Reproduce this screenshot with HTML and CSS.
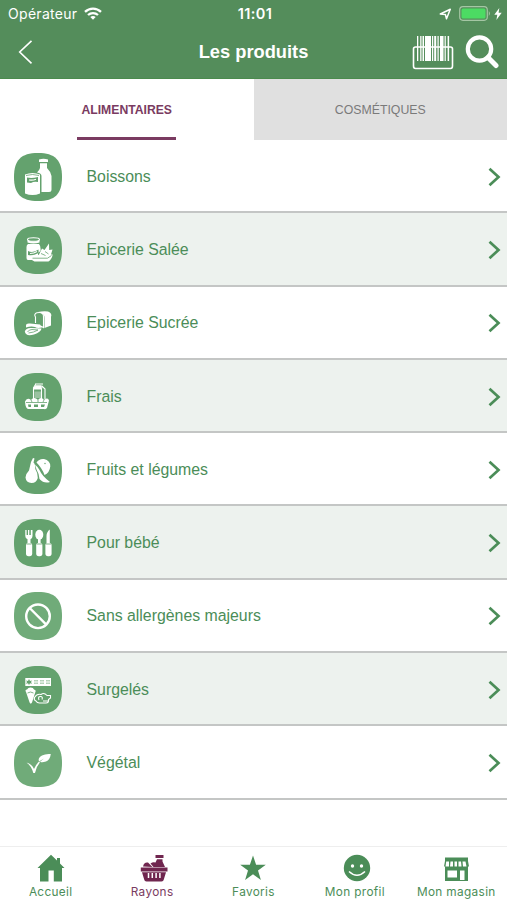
FILE: index.html
```html
<!DOCTYPE html>
<html lang="fr">
<head>
    <meta charset="UTF-8">
    <meta name="viewport" content="width=device-width, initial-scale=1.0">
    <title>Les produits</title>
    <link rel="stylesheet" href="styles.css">
</head>
<body>

<div class="app">
    <header class="header">
        <div class="status">
            <div class="status-left">
                <span class="operator">Opérateur</span>
                <svg width="18" height="13" viewBox="0 0 18 13" fill="none" stroke="#fff" stroke-width="2.3">
                    <path d="M1 4.8C5.6.5 12.4.5 17 4.8"/>
                    <path d="M4 8C6.8 5.4 11.2 5.4 14 8"/>
                    <path d="M6.3 10.1Q9 7.9 11.7 10.1L9 12.8Z" fill="#fff" stroke="none"/>
                </svg>
            </div>
            <span class="clock">11:01</span>
            <div class="status-right">
                <svg width="13" height="12" viewBox="0 0 13 12" fill="none" stroke="#fff" stroke-width="1.5" stroke-linejoin="round">
                    <path d="M1.3 6L11.3 1.2 7.5 10.8 6.4 6.5Z"/>
                </svg>
                <svg width="32" height="15" viewBox="0 0 32 15">
                    <rect x=".7" y=".7" width="27.6" height="13.6" rx="3.2" fill="none" stroke="#a5c6a4" stroke-width="1.2"/>
                    <rect x="2.5" y="2.5" width="24" height="10" rx="1.5" fill="#4cdb63"/>
                    <path d="M29.8 5Q32 7.5 29.8 10Z" fill="#a5c6a4"/>
                </svg>
                <svg width="8" height="12" viewBox="0 0 8 12">
                    <path d="M5.3 0L.3 6.8H3.3L2.4 12 7.7 4.8H4.6Z" fill="#fff"/>
                </svg>
            </div>
        </div>
        <div class="nav">
            <a href="#" class="back" aria-label="Retour">
                <svg width="16" height="26" viewBox="0 0 16 26" fill="none" stroke="#fff" stroke-width="1.6">
                    <path d="M13.5 1.8L1.7 13 13.5 24.3"/>
                </svg>
            </a>
            <h1>Les produits</h1>
            <div class="actions">
                <svg width="42" height="35" viewBox="0 0 42 35" fill="#fff">
                    <path d="M5 1h1.3v25H5zM8.2 1h1.3v25H8.2zM10.5 1h1.5v25h-1.5zM13 1h6v25h-6zM20 1h1.2v25H20zM22.2 1h2v25h-2zM25.5 1h1.2v25h-1.2zM28 1h3.5v25H28zM32.6 1h1.2v25h-1.2zM35.6 1h1.5v25h-1.5z"/>
                    <path d="M1.5 31V14Q1.5 12 3.5 12H38.5Q40.5 12 40.5 14V31Q40.5 33.500 38.500 33.500H3.500Q1.500 33.500 1.500 31Z" fill="none" stroke="#fff" stroke-width="1.6"/>
                </svg>
                <svg width="34" height="34" viewBox="0 0 34 34" fill="none" stroke="#fff">
                    <circle cx="14.5" cy="14" r="11.7" stroke-width="4.2"/>
                    <path d="M23 22.5L31 30.5" stroke-width="5" stroke-linecap="round"/>
                </svg>
            </div>
        </div>
    </header>

    <div class="tabs">
        <a href="#" class="tab active"><span>ALIMENTAIRES</span></a>
        <a href="#" class="tab"><span>COSMÉTIQUES</span></a>
    </div>

    <main class="list">
        <a href="#" class="row">
            <svg class="icon" viewBox="0 0 48 48">
                <path class="tile" d="M24 0C41 0 48 7 48 24S41 48 24 48 0 41 0 24 7 0 24 0Z"/>
                <path d="M25 6.5Q29.5 5 34 6.5V9H25Z"/>
                <path d="M26 10.3H33V15Q37 19 37.5 23V36.5Q37.5 39 35 39H27.5V23Q27.5 20 23 19.5Q25.5 17 26 15Z"/>
                <path d="M11 21.5Q18.5 18.5 26 21.5V40.5Q18.5 43.5 11 40.5Z"/>
                <path class="line-green" d="M12 22.5Q18.5 20.5 25 22.5"/>
                <path class="cut" d="M13 24.5Q18 25.5 24 24V29Q20 28 17 30L13 29.5Z"/>
                <path class="line" d="M15 27Q19 27.5 22 26.2"/>
            </svg>
            <span class="label">Boissons</span>
            <svg class="chevron" viewBox="0 0 14 20"><path d="M2.5 1.8L11.5 10 2.5 18.2"/></svg>
        </a>
        <a href="#" class="row">
            <svg class="icon" viewBox="0 0 48 48">
                <path class="tile" d="M24 0C41 0 48 7 48 24S41 48 24 48 0 41 0 24 7 0 24 0Z"/>
                <ellipse class="line" cx="19.5" cy="13.5" rx="6" ry="1.8"/>
                <path d="M13.5 14Q19.5 17 25.5 14V16.5Q19.5 18.5 13.5 16.5Z"/>
                <path d="M14 18H25Q27 20 26.500 25L24 27V34H14Q12.500 34 12.500 32V21Q12.500 19 14 18Z"/>
                <path class="cut" d="M14 25Q19 27.5 24.500 23.500V27Q19 30 14 29Z"/>
                <path class="line" d="M16 27.500Q20 27.500 23 25.500"/>
                <path d="M25 28.500L28 22.500 30.500 24 35 17.500 35.200 24 38.500 23.500 37 28.500H38.700Q38 33 34.500 35.500H20.500Q17 34 16 30.500Q21 32 25 28.500Z"/>
                <path class="line-green" d="M18.500 32.200H33.500L37.500 29.500M27 27.500L31.500 29.500M31 25.500L34.500 28"/>
            </svg>
            <span class="label">Epicerie Salée</span>
            <svg class="chevron" viewBox="0 0 14 20"><path d="M2.5 1.8L11.5 10 2.5 18.2"/></svg>
        </a>
        <a href="#" class="row">
            <svg class="icon" viewBox="0 0 48 48">
                <path class="tile" d="M24 0C41 0 48 7 48 24S41 48 24 48 0 41 0 24 7 0 24 0Z"/>
                <path d="M24 13Q29 12 34 12.5Q38.5 14 37 18V26.5L30.5 29V19Q31 14.5 24 13Z"/>
                <path class="line" d="M21.5 24V18Q19.5 15 23 13.8Q30 12.5 29.5 18V28.5L26.5 27"/>
                <path d="M12 26.5Q12 24 16 24.5L26 25.5 28 28.5Q23 29.5 21 28Q17 27 12 28.5Z"/>
                <path d="M10.8 32.5Q12 28.5 17.5 29L27.5 29.5Q27 33 20 35.500Q12 38 10.800 32.500Z"/>
                <path class="line-green" d="M13.500 33Q15 30.500 18 30.500L24 31Q20 33.500 14.500 34"/>
            </svg>
            <span class="label">Epicerie Sucrée</span>
            <svg class="chevron" viewBox="0 0 14 20"><path d="M2.5 1.8L11.5 10 2.5 18.2"/></svg>
        </a>
        <a href="#" class="row">
            <svg class="icon" viewBox="0 0 48 48">
                <path class="tile" d="M24 0C41 0 48 7 48 24S41 48 24 48 0 41 0 24 7 0 24 0Z"/>
                <path class="line" d="M21 11H29M21.5 11.500L19.500 15V26M21 13H28L31 16V26M20 16H27.500V26M28 13L27.500 16"/>
                <path d="M20.500 18.500H27V25H20.500Z" opacity=".35"/>
                <path d="M19.500 14.500L22 12.500H27L27 16H19.500Z"/>
                <path d="M11 28.500Q13 24 17 27Q20 23 24 27Q27 23 30 27Q34 24 35 27.500L33 35Q32 36.500 30 36H14Q11.500 35.500 11 28.500Z"/>
                <path class="line-green" d="M12 29.500H33M17 27L18 29M24 27V29M30 27L29 29"/>
                <path class="cut" d="M14 31.500H17V34H14.500ZM20 31.500H24V34H20ZM27 31.500H31L30 34H27Z"/>
            </svg>
            <span class="label">Frais</span>
            <svg class="chevron" viewBox="0 0 14 20"><path d="M2.5 1.8L11.5 10 2.5 18.2"/></svg>
        </a>
        <a href="#" class="row">
            <svg class="icon" viewBox="0 0 48 48">
                <path class="tile" d="M24 0C41 0 48 7 48 24S41 48 24 48 0 41 0 24 7 0 24 0Z"/>
                <path d="M17 16L19 12 20.500 12.500 19.500 16.500Q21.500 18 21.300 23Q24 27 23.800 32Q22.500 37 17.500 37Q12 36.500 11.500 31.500Q11.500 28 15 24.500Z"/>
                <path d="M22.500 16.500Q25 12.500 30 13Q36.500 14.500 36.300 20.500Q35.500 27 30.500 29Q28 22 22.500 16.500Z"/>
                <path d="M21 18.500Q23 20 25.500 24Q28 30 36 36Q30 38 25.500 33Q25 27.500 22.500 23.500Z"/>
                <circle class="cut" cx="31" cy="17.500" r=".7"/>
            </svg>
            <span class="label">Fruits et légumes</span>
            <svg class="chevron" viewBox="0 0 14 20"><path d="M2.5 1.8L11.5 10 2.5 18.2"/></svg>
        </a>
        <a href="#" class="row">
            <svg class="icon" viewBox="0 0 48 48">
                <path class="tile" d="M24 0C41 0 48 7 48 24S41 48 24 48 0 41 0 24 7 0 24 0Z"/>
                <path d="M11.300 11H12.600V16H14V11H15.300V16H16.800V11H18.500V17Q18.500 19.500 16.500 20.300V24H13.500V20.300Q11.300 19.500 11.300 17Z"/>
                <ellipse cx="25.300" cy="15.800" rx="4" ry="5"/>
                <path d="M24 20H26.600V24H24ZM32.500 24V17Q32.500 13 35.800 10.500V24Z"/>
                <rect x="12" y="23.800" width="6.200" height="13.400" rx="2.600"/>
                <rect x="22.200" y="23.800" width="6.200" height="13.400" rx="2.600"/>
                <rect x="31.400" y="23.800" width="6.200" height="13.400" rx="2.600"/>
                <path class="line-green" d="M12.500 25H17.500M22.800 25H27.800M32 25H37"/>
            </svg>
            <span class="label">Pour bébé</span>
            <svg class="chevron" viewBox="0 0 14 20"><path d="M2.5 1.8L11.5 10 2.5 18.2"/></svg>
        </a>
        <a href="#" class="row light">
            <svg class="icon" viewBox="0 0 48 48">
                <path class="tile" d="M24 0C41 0 48 7 48 24S41 48 24 48 0 41 0 24 7 0 24 0Z"/>
                <g fill="none" stroke="#fff" stroke-width="2.4">
                    <circle cx="24" cy="24.3" r="11.8"/>
                    <path d="M15.7 16L32.3 32.6"/>
                </g>
            </svg>
            <span class="label">Sans allergènes majeurs</span>
            <svg class="chevron" viewBox="0 0 14 20"><path d="M2.5 1.8L11.5 10 2.5 18.2"/></svg>
        </a>
        <a href="#" class="row">
            <svg class="icon" viewBox="0 0 48 48">
                <path class="tile" d="M24 0C41 0 48 7 48 24S41 48 24 48 0 41 0 24 7 0 24 0Z"/>
                <path d="M11.300 12H37V20H11.300Z"/>
                <path class="cut" d="M15 13L16 15 18 14.500 17 16 18 17.800 16 17.200 15 19 14 17.200 12 17.800 13 16 12 14.500 14 15Z"/>
                <path class="cut" d="M20.500 14H23.500V18H20.500ZM26.500 14H29.500V18H26.500ZM32.500 14H35.500V18H32.500Z"/>
                <path class="line" d="M20 16H24M22 14V18M26 16H30M28 14V18M32 16H36M34 14V18"/>
                <path d="M12 26Q10.500 24 13 23.500Q14 21.500 16.500 21.500Q19.500 21.500 20 23.500Q22.500 24 21.200 26.500L18 36.500Q16.800 38.800 15.600 36.500Z"/>
                <path class="line-green" d="M13.500 27Q16.500 25 19.500 27"/>
                <path class="line" d="M22 35Q19.500 34 20.500 31.500Q23 27.500 27 28.500Q30 26 33 29.500H36.500V32L34.500 33.500Q35 37 32 37H25.500Q23 37 22 35ZM25 34Q23.500 30 27 30.500Q29 31 28 33.500M29 35H35"/>
            </svg>
            <span class="label">Surgelés</span>
            <svg class="chevron" viewBox="0 0 14 20"><path d="M2.5 1.8L11.5 10 2.5 18.2"/></svg>
        </a>
        <a href="#" class="row light">
            <svg class="icon" viewBox="0 0 48 48">
                <path class="tile" d="M24 0C41 0 48 7 48 24S41 48 24 48 0 41 0 24 7 0 24 0Z"/>
                <path d="M12.500 23.500Q18 25 20 30Q21.500 26 25 22.500L26 23.300Q22 28 21 34H19.300Q17.500 27 12.500 23.500Z"/>
                <path d="M25 22.500Q23.500 19 28 16.500Q31.500 14.500 36.800 15Q36 21 32 22.500Q28 24 26 22.800L30 19.500Z"/>
            </svg>
            <span class="label">Végétal</span>
            <svg class="chevron" viewBox="0 0 14 20"><path d="M2.5 1.8L11.5 10 2.5 18.2"/></svg>
        </a>
    </main>

    <footer class="tabbar">
        <a href="#" class="item">
            <svg viewBox="0 0 28 28">
                <path d="M14 .8L20 6.500V4H23V9.500L27.500 14H25V27.500H16.800V16.500H11.500V27.500H3V14H.5Z"/>
            </svg>
            <span>Accueil</span>
        </a>
        <a href="#" class="item current">
            <svg viewBox="0 0 28 28">
                <path d="M15.500 1H23.500V4H15.500ZM17 5.200H22.500V7.500L25 13H13.500L10.500 9.500Q13 7.500 15.500 8.500Z"/>
                <path d="M3 12.500Q4 7.800 8 8.500L12.500 13Z"/>
                <path d="M.8 13.500H27.500V17.500H.8ZM2 18.200H26L23.800 25.500Q23.500 27.500 21.500 27.500H6.500Q4.500 27.500 4.200 25.500Z"/>
                <path d="M8.500 19V24M12.300 19V24M16.100 19V24M19.900 19V24" stroke="#fff" stroke-width="1.5"/>
            </svg>
            <span>Rayons</span>
        </a>
        <a href="#" class="item">
            <svg viewBox="0 0 28 28">
                <path d="M14 1.500L17.100 10.700H26.800L19 16.500 21.900 26 14 20.300 6.100 26 9 16.500 1.200 10.700H10.900Z"/>
            </svg>
            <span>Favoris</span>
        </a>
        <a href="#" class="item">
            <svg class="smiley" viewBox="0 0 28 28">
                <circle cx="14" cy="14" r="13.2"/>
                <circle cx="9.500" cy="12" r="1.700" fill="#fff"/>
                <circle cx="18.500" cy="12" r="1.700" fill="#fff"/>
                <path d="M6 17.500Q14 25 22 17.500" fill="none" stroke="#fff" stroke-width="1.5"/>
            </svg>
            <span>Mon profil</span>
        </a>
        <a href="#" class="item">
            <svg class="shop" viewBox="0 0 28 28">
                <path d="M3 3.500H26V7L27 12.500H26V27H3V12.500H2L3 7Z"/>
                <path d="M4.200 7.500H7V12.500H3.500ZM8.500 7.500H11V12.500H8ZM12.500 7.500H15V12.500H12.500ZM16.500 7.500H19L19.500 12.500H16.500ZM20.500 7.500H23.500L24.500 12.500H21ZM5.500 16.500H15V23.500H5.500ZM18 16.500H22.500V26H18Z" fill="#fff"/>
            </svg>
            <span>Mon magasin</span>
        </a>
    </footer>
</div>

</body>
</html>
```

FILE: styles.css
```css
/* Root colors */
:root {
    --header-color: #548d5b;
    --primary-color: #4b8d58;
    --tile-color: #64a26e;
    --tile-light: #70ab79;
    --accent-color: #7a3b61;
    --row-alt: #edf2ee;
    --line-color: #c4c6c5;
}

/* General styles */
* {
    box-sizing: border-box;
}

body {
    font-family: "Liberation Sans", Arial, sans-serif;
    margin: 0;
    background: #ffffff;
    color: var(--primary-color);
}

a {
    color: inherit;
    text-decoration: none;
}

svg {
    display: block;
    flex: none;
}

.app {
    display: flex;
    flex-direction: column;
    height: 900px;
    overflow: hidden;
}

/* Header */
.header {
    height: 79px;
    flex: none;
    background: var(--header-color);
    border-bottom: 1px solid #4b8b4d;
    color: #ffffff;
}

.status {
    display: grid;
    grid-template-columns: 1fr auto 1fr;
    align-items: center;
    height: 27px;
    padding: 0 5px 0 8px;
    font-family: Inter, sans-serif;
    font-size: 14px;
}

.status-left, .status-right {
    display: flex;
    align-items: center;
}

.status-left {
    gap: 7px;
}

.operator {
    letter-spacing: 0.3px;
}

.status-right {
    justify-content: flex-end;
    gap: 3px;
}

.status-right svg:first-child {
    margin-right: 4px;
}

.clock {
    font-size: 14.5px;
    font-weight: 600;
    letter-spacing: 0.4px;
}

.nav {
    display: grid;
    grid-template-columns: 1fr auto 1fr;
    align-items: center;
    height: 50px;
    padding: 0 8px 0 18px;
}

.nav h1 {
    margin: 0;
    padding-right: 10px;
    font-size: 18.3px;
}

.actions {
    display: flex;
    justify-content: flex-end;
    gap: 11px;
}

/* Tabs */
.tabs {
    display: flex;
    height: 61px;
    flex: none;
}

.tab {
    display: flex;
    flex: 1;
    justify-content: center;
    background: #e0e0e0;
    color: #7a7a7a;
    font-size: 12.3px;
    line-height: 62px;
}

.tab.active {
    background: #ffffff;
    color: var(--accent-color);
    font-size: 12.2px;
    font-weight: bold;
}

.tab.active span {
    padding: 0 4px;
    border-bottom: 3px solid var(--accent-color);
}

/* Product list */
.list {
    flex: 1;
}

.row {
    display: flex;
    align-items: center;
    height: 73.3px;
    padding: 2px 6px 0 13.5px;
    border-bottom: 2px solid var(--line-color);
}

.row:nth-child(even) {
    background: var(--row-alt);
}

.icon {
    width: 48px;
    height: 48px;
    fill: #ffffff;
}

.tile, .cut {
    fill: var(--tile-color);
}

.light .tile {
    fill: var(--tile-light);
}

.line, .line-green {
    fill: none;
    stroke: #ffffff;
    stroke-width: 1.1;
}

.line-green {
    stroke: var(--tile-color);
    stroke-width: 0.8;
}

.label {
    flex: 1;
    margin-left: 25px;
    font-size: 15.85px;
}

.chevron {
    width: 14px;
    height: 20px;
    fill: none;
    stroke: var(--primary-color);
    stroke-width: 2.7;
}

/* Bottom bar */
.tabbar {
    display: grid;
    grid-template-columns: repeat(5, 1fr);
    height: 54px;
    flex: none;
    border-top: 1px solid #eeeeee;
}

.item {
    display: flex;
    flex-direction: column;
    align-items: center;
    padding-top: 7px;
    font-family: Inter, sans-serif;
    font-size: 11.8px;
    line-height: 20px;
    letter-spacing: 0.35px;
    white-space: nowrap;
}

.item svg {
    width: 28px;
    height: 28px;
    fill: var(--primary-color);
}

.item .smiley {
    margin-left: 4px;
}

.item.current {
    color: var(--accent-color);
}

.item.current svg {
    margin-left: 3px;
    fill: #70264f;
}
```
